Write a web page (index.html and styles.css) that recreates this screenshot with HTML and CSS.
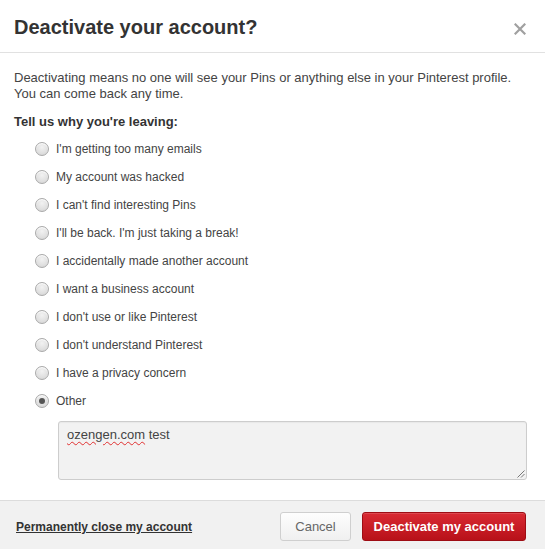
FILE: index.html
```html
<!DOCTYPE html>
<html>
<head>
<meta charset="utf-8">
<link rel="stylesheet" href="styles.css">
</head>
<body>
<div class="dialog">
  <div class="header">
    <h1 class="title">Deactivate your account?</h1>
    <svg class="close" width="12" height="12" viewBox="0 0 12 12"><path d="M1.5 1.5 L10.5 10.5 M10.5 1.5 L1.5 10.5" stroke="#a0a0a0" stroke-width="2.2" stroke-linecap="square"/></svg>
  </div>
  <div class="body">
    <p class="intro">Deactivating means no one will see your Pins or anything else in your Pinterest profile.<br>You can come back any time.</p>
    <p class="ask">Tell us why you're leaving:</p>
    <ul class="options">
      <li class="option"><span class="radio"></span><span class="label">I'm getting too many emails</span></li>
      <li class="option"><span class="radio"></span><span class="label">My account was hacked</span></li>
      <li class="option"><span class="radio"></span><span class="label">I can't find interesting Pins</span></li>
      <li class="option"><span class="radio"></span><span class="label">I'll be back. I'm just taking a break!</span></li>
      <li class="option"><span class="radio"></span><span class="label">I accidentally made another account</span></li>
      <li class="option"><span class="radio"></span><span class="label">I want a business account</span></li>
      <li class="option"><span class="radio"></span><span class="label">I don't use or like Pinterest</span></li>
      <li class="option"><span class="radio"></span><span class="label">I don't understand Pinterest</span></li>
      <li class="option"><span class="radio"></span><span class="label">I have a privacy concern</span></li>
      <li class="option"><span class="radio checked"></span><span class="label">Other</span></li>
    </ul>
    <div class="textarea"><span class="misspelled">ozengen.com</span> test
      <svg class="grip" width="9" height="9" viewBox="0 0 9 9"><path d="M8.5 1.5 L1.5 8.5 M8.5 5 L5 8.5" stroke="#777" stroke-width="1"/></svg>
    </div>
  </div>
  <div class="footer">
    <a class="close-link" href="#">Permanently close my account</a>
    <div class="actions">
      <button class="btn cancel">Cancel</button>
      <button class="btn primary">Deactivate my account</button>
    </div>
  </div>
</div>
</body>
</html>
```
FILE: styles.css
```css
html, body {
  margin: 0;
  padding: 0;
  background: #fff;
}
body {
  font-family: "Liberation Sans", Arial, sans-serif;
  color: #333;
}
.dialog {
  width: 545px;
  height: 549px;
  display: flex;
  flex-direction: column;
}
.header {
  height: 52px;
  border-bottom: 1px solid #e1e1e1;
  display: flex;
  align-items: center;
  justify-content: space-between;
  padding: 0 19px 0 14px;
  box-sizing: content-box;
}
.title {
  margin: 0;
  font-size: 20px;
  font-weight: bold;
  color: #333;
  line-height: 24px;
  padding-top: 2px;
}
.close {
  margin-top: 5px;
}
.body {
  flex: 1;
  padding: 17px 14px 0 14px;
}
.intro {
  margin: 0;
  font-size: 13px;
  line-height: 16px;
  color: #444;
}
.ask {
  margin: 12px 0 0 0;
  font-size: 13px;
  font-weight: bold;
  line-height: 16px;
  color: #333;
}
.options {
  list-style: none;
  margin: 5px 0 0 0;
  padding: 0 0 0 21px;
}
.option {
  height: 28px;
  display: flex;
  align-items: center;
}
.radio {
  width: 12px;
  height: 12px;
  border-radius: 50%;
  border: 1px solid #a9a9a9;
  background: radial-gradient(circle at 50% 35%, #f2f2f2 0%, #dedede 65%, #cfcfcf 100%);
  box-shadow: inset 0 1px 1px #fff;
  margin-right: 7px;
  position: relative;
  flex: none;
}
.radio.checked::after {
  content: "";
  position: absolute;
  left: 3px;
  top: 3px;
  width: 6px;
  height: 6px;
  border-radius: 50%;
  background: #555;
}
.label {
  font-size: 12px;
  color: #444;
}
.textarea {
  position: relative;
  margin: 6px 4px 0 44px;
  height: 47px;
  border: 1px solid #cdcdcd;
  border-radius: 3px;
  background: #f2f2f2;
  padding: 5px 8px;
  font-size: 13px;
  line-height: 16px;
  color: #444;
  box-shadow: inset 0 1px 1px rgba(0,0,0,0.04);
}
.misspelled {
  text-decoration: underline wavy #e03030;
  text-decoration-thickness: 1px;
  text-underline-offset: 2px;
}
.grip {
  position: absolute;
  right: 1px;
  bottom: 1px;
}
.footer {
  height: 48px;
  border-top: 1px solid #dcdcdc;
  background: #f1f1f1;
  display: flex;
  align-items: center;
  justify-content: space-between;
  padding: 0 19px 0 16px;
}
.close-link {
  font-size: 12px;
  font-weight: bold;
  color: #333;
  text-decoration: underline;
  margin-top: 4px;
}
.actions {
  display: flex;
  gap: 11px;
  margin-top: 3px;
}
.btn {
  font-family: "Liberation Sans", Arial, sans-serif;
  font-size: 13px;
  height: 29px;
  border-radius: 3px;
  padding: 0 4px;
  white-space: nowrap;
  cursor: pointer;
}
.cancel {
  width: 71px;
  background: linear-gradient(#fdfdfd, #f0f0f0);
  border: 1px solid #cfcfcf;
  color: #666;
}
.primary {
  width: 164px;
  background: linear-gradient(#d92a33, #b81119);
  border: 1px solid #9e0d14;
  color: #fff;
  font-weight: bold;
  box-shadow: inset 0 1px 0 rgba(255,255,255,0.15);
}
```
